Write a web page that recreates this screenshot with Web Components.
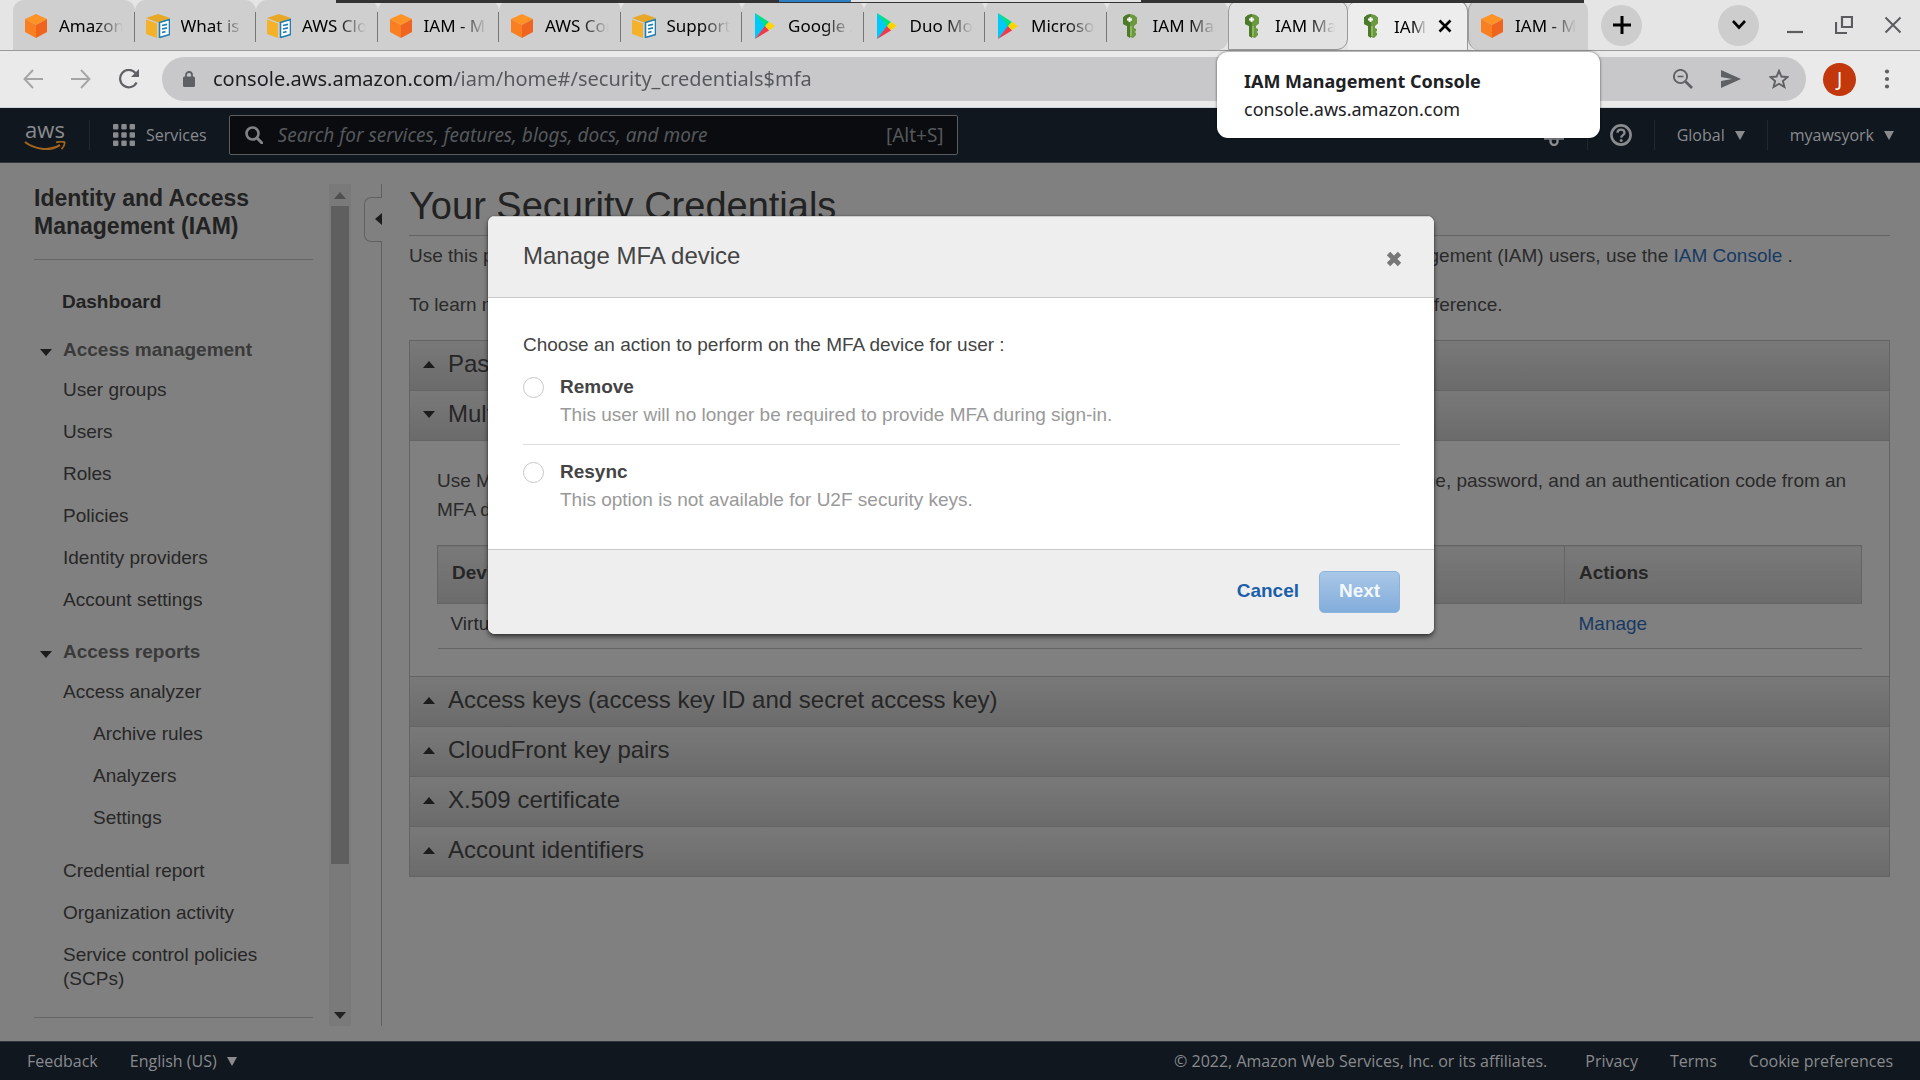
<!DOCTYPE html>
<html lang="en">
<head>
<meta charset="utf-8">
<title>IAM Management Console</title>
<style>
  html, body { height: 100%; margin: 0; }
  body { font-family: "Liberation Sans", Arial, sans-serif; background: #808080; overflow: hidden; }
</style>
</head>
<body>
<browser-window></browser-window>

<script>
const define = (name, css, html, setup) => customElements.define(name, class extends HTMLElement {
  constructor() {
    super();
    const t = document.createElement('template');
    t.innerHTML = `<style>*{box-sizing:border-box}${css}</style>${html}`;
    this.attachShadow({ mode: 'open' }).append(t.content.cloneNode(true));
  }
  connectedCallback() { if (setup) setup(this, this.shadowRoot); }
});

const ICONS = {
  cube: ['22 24', '<path d="M11 0 22 5 11 11 0 5z" fill="#ff9326"/><path d="M0 5 11 11V24L0 18z" fill="#f97f20"/><path d="M22 5 11 11V24l11-6z" fill="#ef6520"/>'],
  docs: ['24 24', '<path d="M12 0 24 4 13 9 0 4z" fill="#e8a827"/><path d="M0 5.500l11 4V24L0 20z" fill="#f3b229"/><path d="M13 9.500 24 5v14l-11 4z" fill="#e9a524"/><path d="M13.500 8.500 23.500 5.500v15l-10 3z" fill="#fff" stroke="#1f7fb5" stroke-width="1.600"/><path d="M16 11.500l5-1.200M16 15l5-1.200M16 18.500l3.500-.9" stroke="#1f7fb5" stroke-width="1.700"/>'],
  play: ['20 26', '<path d="M0 0v26l11-13z" fill="#00c8f8"/><path d="M0 0l14 9-4 4.500z" fill="#00e080"/><path d="M0 26l14-8.500-4-4.500z" fill="#f5374a"/><path d="M14 8.700 20 13l-6 4.300-4-4.300z" fill="#ffd400"/>'],
  key: ['14 24', '<path d="M0 3.500 3 1 7 0l4 1 3 2.500v6L11 12v2l2 1v2l-1.500 1 1.500 1v2l-3 3-6-2V12L0 10z" fill="#6a9940"/><path d="M0 3.500 3 1 7 0v24l-3-2V12L0 10z" fill="#4b7a2a"/><path d="M8 12v10" stroke="#8fb75f" stroke-width="2"/><path d="M6.500 3v5M4 5.500h5" stroke="#fff" stroke-width="1.800"/>'],
  close: ['14 14', '<path d="M1.500 1.500l11 11M12.500 1.500l-11 11" stroke="currentColor" stroke-width="2.600"/>'],
  plus: ['18 18', '<path d="M9 0v18M0 9h18" stroke="currentColor" stroke-width="3"/>'],
  chevron: ['14 10', '<path d="M1 1l6 6.500L13 1" fill="none" stroke="currentColor" stroke-width="2.600"/>'],
  minimize: ['18 18', '<path d="M1 16h16" stroke="currentColor" stroke-width="2.200"/>'],
  restore: ['18 18', '<path d="M7 1h10v10H7zM1 6v11h11" fill="none" stroke="currentColor" stroke-width="2.200"/>'],
  exit: ['18 18', '<path d="M1.500 1.500l15 15M16.500 1.500l-15 15" stroke="currentColor" stroke-width="2"/>'],
  back: ['20 20', '<path d="M20 10H2M10 1 1.500 10l8.500 9" fill="none" stroke="currentColor" stroke-width="1.900"/>'],
  forward: ['20 20', '<path d="M0 10h18M10 1l8.500 9L10 19" fill="none" stroke="currentColor" stroke-width="1.900"/>'],
  reload: ['20 20', '<path d="M17.600 13.500A8.700 8.700 0 1 1 16.500 4" fill="none" stroke="currentColor" stroke-width="2.200"/><path d="M20 0v8h-8z" fill="currentColor"/>'],
  lock: ['12 16', '<rect y="5.500" width="12" height="10.500" rx="1.500" fill="currentColor"/><path d="M3 6V4a3 3 0 0 1 6 0v2" fill="none" stroke="currentColor" stroke-width="1.800"/>'],
  zoomout: ['20 20', '<circle cx="7.500" cy="7.500" r="6.600" fill="none" stroke="currentColor" stroke-width="1.900"/><path d="M12.500 12.500l6.500 6.500" stroke="currentColor" stroke-width="2.600"/><path d="M4.500 7.500h6" stroke="currentColor" stroke-width="1.600"/>'],
  send: ['20 18', '<path d="M0 0l20 9-20 9v-7l11-2L0 7z" fill="currentColor"/>'],
  star: ['20 20', '<path d="M10 1.800l2.400 5.700 6.200.5-4.700 4 1.500 6L10 14.800 4.600 18l1.500-6-4.700-4 6.200-.5z" fill="none" stroke="currentColor" stroke-width="1.900"/>'],
  dots: ['6 20', '<g fill="currentColor"><circle cx="3" cy="2.500" r="2.100"/><circle cx="3" cy="10" r="2.100"/><circle cx="3" cy="17.500" r="2.100"/></g>'],
  smile: ['42 10', '<path d="M1 1c9 7 24 10 35 3" fill="none" stroke="currentColor" stroke-width="2.200"/><path d="M32 1.500c3-1 6-1.200 8.500-.4.600 2.400-1 5-3 7" fill="none" stroke="currentColor" stroke-width="1.800"/>'],
  grid: ['22 22', '<g fill="currentColor">' + [0, 8.300, 16.600].map(y => [0, 8.300, 16.600].map(x => `<rect x="${x}" y="${y}" width="5.400" height="5.400" rx="1"/>`).join('')).join('') + '</g>'],
  search: ['18 18', '<circle cx="7.500" cy="7.500" r="6" fill="none" stroke="currentColor" stroke-width="2.600"/><path d="M12 12l5 5" stroke="currentColor" stroke-width="3" stroke-linecap="round"/>'],
  bell: ['22 22', '<path d="M1 14.500h20M4 14V9a7 7 0 0 1 14 0v5" fill="none" stroke="currentColor" stroke-width="2.600"/><path d="M7.500 15v2.500a3.500 3.500 0 0 0 7 0V15" fill="none" stroke="currentColor" stroke-width="2.400"/>'],
  help: ['22 22', '<circle cx="11" cy="11" r="9.600" fill="none" stroke="currentColor" stroke-width="2.600"/><path d="M7.500 8.800c0-4.300 7-4.300 7 0 0 2.400-3.300 2.400-3.300 5" fill="none" stroke="currentColor" stroke-width="2.300"/><circle cx="11.200" cy="16.400" r="1.500" fill="currentColor"/>'],
  down: ['10 9', '<path d="M0 0h10L5 9z" fill="currentColor"/>'],
  caretdown: ['12 7', '<path d="M0 0h12L6 7z" fill="currentColor"/>'],
  caretup: ['12 7', '<path d="M0 7h12L6 0z" fill="currentColor"/>'],
  caretleft: ['7 12', '<path d="M7 0v12L0 6z" fill="currentColor"/>'],
  cross: ['16 16', '<path d="M2.500 2.500l11 11M13.500 2.500l-11 11" stroke="currentColor" stroke-width="4.800"/>'],
};

define('ui-icon', ':host{display:inline-flex;flex:none}svg{display:block}', '<span id="box"></span>', (el, root) => {
  const [size, body] = ICONS[el.getAttribute('name')];
  const [w, h] = size.split(' ');
  root.getElementById('box').innerHTML = `<svg width="${w}" height="${h}" viewBox="0 0 ${size}" aria-hidden="true">${body}</svg>`;
});

/* ---------- browser chrome ---------- */

define('browser-tab', `
  :host{display:flex;flex:1;min-width:0;height:50px}
  :host([state]),:host([edge=left]){flex:0 0 120px}
  button{flex:1;min-width:0;display:flex;align-items:center;gap:11px;height:50px;padding:1px 12px 0 11px;border:0;
    border-radius:11px 11px 0 0;background:#cfcfcf;color:#000;font:17px "Noto Sans","Open Sans",sans-serif;text-align:left;position:relative}
  .icon{width:24px;flex:none;display:flex;justify-content:center}
  .label{flex:1;min-width:0;overflow:hidden;white-space:nowrap;-webkit-mask-image:linear-gradient(90deg,#000 55%,transparent);mask-image:linear-gradient(90deg,#000 55%,transparent)}
  :host([divider]) button::after{content:"";position:absolute;right:0;top:12px;height:30px;border-right:1px solid #777}
  :host([state=selected]) button{background:#e2e2e2;border:1px solid #999;border-bottom-right-radius:11px}
  :host([state=active]) button{background:#ededed;border-top:1px solid #999;border-right:1px solid #999;gap:11px;padding-right:15px}
  :host([edge=right]) button{border-bottom-right-radius:11px}
  :host([edge=left]) button{border-bottom-left-radius:11px;border-left:1px solid #999}
  #close{display:none;color:#000}
  :host([state=active]) #close{display:flex}
`, `<button type="button"><span class="icon"></span><span class="label"><slot></slot></span><ui-icon id="close" name="close"></ui-icon></button>`,
(el, root) => { root.querySelector('.icon').innerHTML = `<ui-icon name="${el.getAttribute('icon')}"></ui-icon>`; });

define('tab-strip', `
  :host{display:flex;height:51px;padding-left:13px;background:#e5e5e5;border-bottom:1px solid #9a9a9a}
  .tabs{flex:1;display:flex;min-width:0}
  .controls{width:332px;display:flex;align-items:center;padding:0 18px 0 13px}
  button{border:0;padding:0;background:none;display:flex;align-items:center;justify-content:center;color:#5c5c60;width:18px;height:30px}
  .round{width:41px;height:41px;border-radius:50%;background:#cdcdcd;color:#000}
  .win{margin-left:auto;display:flex;align-items:center;gap:31px}
  .win .round{margin-right:-4px}
`, `
  <div class="tabs">
    <browser-tab icon="cube" divider>Amazon Web Services</browser-tab>
    <browser-tab icon="docs" divider>What is IAM?</browser-tab>
    <browser-tab icon="docs" divider>AWS Cloud</browser-tab>
    <browser-tab icon="cube" divider>IAM - MFA</browser-tab>
    <browser-tab icon="cube" divider>AWS Console</browser-tab>
    <browser-tab icon="docs" divider>Supported</browser-tab>
    <browser-tab icon="play" divider>Google&nbsp;Auth</browser-tab>
    <browser-tab icon="play" divider>Duo Mobile</browser-tab>
    <browser-tab icon="play" divider>Microsoft</browser-tab>
    <browser-tab icon="key" edge="right">IAM Management</browser-tab>
    <browser-tab icon="key" state="selected">IAM Management</browser-tab>
    <browser-tab icon="key" state="active">IAM Management</browser-tab>
    <browser-tab icon="cube" edge="left">IAM - MFA</browser-tab>
  </div>
  <div class="controls">
    <button class="round" type="button" aria-label="New tab"><ui-icon name="plus"></ui-icon></button>
    <div class="win">
      <button class="round" type="button" aria-label="Search tabs"><ui-icon name="chevron"></ui-icon></button>
      <button type="button" aria-label="Minimize"><ui-icon name="minimize"></ui-icon></button>
      <button type="button" aria-label="Restore"><ui-icon name="restore"></ui-icon></button>
      <button type="button" aria-label="Close"><ui-icon name="exit"></ui-icon></button>
    </div>
  </div>`);

define('address-bar', `
  :host{display:flex;align-items:center;height:57px;padding:0 30px 0 23px;background:#eaeaea;border-bottom:1px solid #d0d4d6;color:#5f6064}
  button{border:0;background:none;padding:0;display:flex;color:inherit}
  nav{display:flex;gap:28px;margin-right:23px;color:#a5a5a5}
  nav .on{color:#5f6064}
  .box{flex:1;display:flex;align-items:center;height:44px;border-radius:22px;background:#c8c8ca;padding:0 17px 0 21px;gap:28px}
  .box ui-icon[name=lock]{margin-right:-10px}
  input{flex:1;min-width:0;border:0;outline:0;padding:0 0 2px;height:44px;font:20px "Noto Sans","Open Sans",sans-serif;color:#55575b;
    background:linear-gradient(90deg,#1c1d20 239px,#55575b 239px);-webkit-background-clip:text;background-clip:text;-webkit-text-fill-color:transparent}
  .avatar{width:33px;height:33px;border-radius:50%;background:#c2370b;color:#fff;font:19px "Noto Sans",sans-serif;align-items:center;justify-content:center;margin:0 28px 0 17px}
`, `
  <nav>
    <button type="button" aria-label="Back"><ui-icon name="back"></ui-icon></button>
    <button type="button" aria-label="Forward"><ui-icon name="forward"></ui-icon></button>
    <button type="button" class="on" aria-label="Reload"><ui-icon name="reload"></ui-icon></button>
  </nav>
  <div class="box">
    <ui-icon name="lock"></ui-icon>
    <input type="text" aria-label="Address" value="console.aws.amazon.com/iam/home#/security_credentials$mfa">
    <button type="button" aria-label="Zoom"><ui-icon name="zoomout"></ui-icon></button>
    <button type="button" aria-label="Share"><ui-icon name="send"></ui-icon></button>
    <button type="button" aria-label="Bookmark"><ui-icon name="star"></ui-icon></button>
  </div>
  <button type="button" class="avatar">J</button>
  <button type="button" aria-label="Menu"><ui-icon name="dots"></ui-icon></button>`);

define('tab-tooltip', `
  :host{position:absolute;z-index:5;left:1217px;top:52px;width:383px;height:86px;padding:15px 27px;border-radius:11px;background:#fff;
    box-shadow:0 0 3px rgba(0,0,0,.6);color:#202124;font:18px/28px "Noto Sans","Open Sans",sans-serif;white-space:nowrap}
  b,span{display:block}
`, `<b>IAM Management Console</b><span>console.aws.amazon.com</span>`);

define('desktop-edge', `
  :host{position:absolute;z-index:4;left:336px;top:0;width:1248px;height:3px;background:#333;display:flex;padding-left:443px}
  i{height:2px}
  .b{width:72px;background:#2d7fc4}.w{width:290px;background:#e2e2e2}
`, `<i class="b"></i><i class="w"></i>`);

/* ---------- console frame ---------- */

define('console-header', `
  :host{display:flex;align-items:center;height:55px;padding:0 26px 0 24px;background:#10171f;border-bottom:1px solid #30353a;color:#898b8e;font:16px "Open Sans","Noto Sans",sans-serif}
  button,a{border:0;background:none;padding:0;color:inherit;font:inherit;display:flex;align-items:center;text-decoration:none}
  .logo{flex-direction:column;width:42px;font:22px/18px "Open Sans",sans-serif}
  .logo ui-icon{color:#a0651a;margin-top:3px}
  hr{width:1px;height:30px;border:0;margin:0;background:#22282f;flex:none}
  .services{gap:11px;margin:0 22px 0 23px}
  .search{width:729px;height:40px;display:flex;align-items:center;border:1px solid #5a5c5f;border-radius:2px;background:#0a0c10;padding:0 13px 0 15px;gap:15px;font:19px "Noto Sans","Open Sans",sans-serif;color:#55585b}
  .search ui-icon{color:#808285}
  input{flex:1;min-width:0;border:0;outline:0;background:none;padding:0;font:italic 19px "Noto Sans","Open Sans",sans-serif;color:#898b8e}
  input::placeholder{color:#55585b;opacity:1}
  .right{margin-left:auto;display:flex;align-items:center;gap:22px}
  .menu{gap:10px}
  .first{margin-left:23px}
`, `
  <a class="logo" href="#"><span>aws</span><ui-icon name="smile"></ui-icon></a>
  <hr class="first">
  <button class="services" type="button"><ui-icon name="grid"></ui-icon>Services</button>
  <label class="search"><ui-icon name="search"></ui-icon><input type="search" aria-label="Search" placeholder="Search for services, features, blogs, docs, and more"><span>[Alt+S]</span></label>
  <div class="right">
    <button type="button" aria-label="Notifications"><ui-icon name="bell"></ui-icon></button><hr>
    <button type="button" aria-label="Help"><ui-icon name="help"></ui-icon></button><hr>
    <button type="button" class="menu">Global <ui-icon name="down"></ui-icon></button><hr>
    <button type="button" class="menu">myawsyork <ui-icon name="down"></ui-icon></button>
  </div>`);

define('console-footer', `
  :host{display:flex;align-items:center;height:39px;padding:0 27px;background:#10171f;border-top:1px solid #30353a;color:#898b8e;font:16px "Open Sans","Noto Sans",sans-serif;gap:32px}
  a,button{color:inherit;text-decoration:none;font:inherit;border:0;padding:0;background:none;display:flex;align-items:center;gap:10px}
  .copy{margin-left:auto;margin-right:6px}
`, `
  <a href="#">Feedback</a>
  <button type="button">English (US) <ui-icon name="down"></ui-icon></button>
  <span class="copy">© 2022, Amazon Web Services, Inc. or its affiliates.</span>
  <a href="#">Privacy</a><a href="#">Terms</a><a href="#">Cookie preferences</a>`);

/* ---------- side navigation ---------- */

define('nav-group', `
  :host{display:block;margin-top:24px}
  button{display:flex;align-items:center;gap:11px;border:0;background:none;padding:0 0 0 6px;font:bold 19px/24px "Liberation Sans",Arial,sans-serif;color:#3a3a3a}
  ui-icon{color:#1c1c1c;margin-top:4px}
  ul{list-style:none;margin:16px 0 0 29px;padding:0;display:flex;flex-direction:column;gap:18px}
`, `<button type="button"><ui-icon name="caretdown"></ui-icon><span id="h"></span></button><ul><slot></slot></ul>`,
(el, root) => { root.getElementById('h').textContent = el.getAttribute('heading'); });

define('nav-item', `
  :host{display:list-item;list-style:none;font-size:19px;line-height:24px}
  :host([nested]){padding-left:30px}
  :host([spaced]){margin-top:11px}
  a{color:#272727;text-decoration:none}
`, `<a href="#"><slot></slot></a>`);

define('iam-nav', `
  :host{display:flex;width:382px;flex:none;padding:21px 0 15px}
  .list{width:279px;margin:0 16px 0 34px;flex:none;overflow:hidden}
  h2{font-size:23px;line-height:28px;margin:0;padding-bottom:19px;border-bottom:1px solid #666;color:#222}
  .home{display:block;margin:30px 0 0 28px;font:bold 19px/24px "Liberation Sans",Arial,sans-serif;color:#222;text-decoration:none}
  nav-group + nav-group{margin-top:28px}
  hr{border:0;border-top:1px solid #666;margin:26px 0 0}
  .bar{width:22px;flex:none;background:#7a7a7a;padding:0 2px;display:flex;flex-direction:column;align-items:center;color:#505050}
  .bar ui-icon{height:22px;align-items:center}
  .thumb{width:18px;flex:658;background:#5f5f5f}
  .rest{flex:140}
  .bar .end{color:#222}
  .edge{flex:1;display:flex;flex-direction:column;align-items:flex-end}
  .line{width:1px;background:#606060;flex:none;height:13px}
  .line.long{flex:1}
  .toggle{width:18px;height:45px;border:1px solid #606060;border-right:0;border-radius:7px 0 0 7px;background:none;padding:0 0 2px;display:flex;align-items:center;justify-content:flex-end;color:#1c1c1c}
`, `
  <div class="list">
    <h2>Identity and Access Management (IAM)</h2>
    <a class="home" href="#">Dashboard</a>
    <nav-group heading="Access management">
      <nav-item>User groups</nav-item><nav-item>Users</nav-item><nav-item>Roles</nav-item>
      <nav-item>Policies</nav-item><nav-item>Identity providers</nav-item><nav-item>Account settings</nav-item>
    </nav-group>
    <nav-group heading="Access reports">
      <nav-item>Access analyzer</nav-item><nav-item nested>Archive rules</nav-item><nav-item nested>Analyzers</nav-item>
      <nav-item nested>Settings</nav-item><nav-item spaced>Credential report</nav-item>
      <nav-item>Organization activity</nav-item><nav-item>Service control policies (SCPs)</nav-item>
    </nav-group>
    <hr>
  </div>
  <div class="bar"><ui-icon name="caretup"></ui-icon><div class="thumb"></div><div class="rest"></div><ui-icon class="end" name="caretdown"></ui-icon></div>
  <div class="edge"><div class="line"></div><button class="toggle" type="button" aria-label="Collapse navigation"><ui-icon name="caretleft"></ui-icon></button><div class="line long"></div></div>`);

/* ---------- credentials page ---------- */

define('accordion-section', `
  :host{display:block}
  button{width:100%;height:50px;display:flex;align-items:center;gap:13px;padding:0 13px 4px;border:0;border-top:1px solid #646464;
    background:linear-gradient(#797979,#6b6b6b);font:24px "Liberation Sans",Arial,sans-serif;color:#262626;text-align:left}
  ui-icon{margin-top:2px;color:#1c1c1c}
  .panel{display:none;border-top:1px solid #646464;padding:25px 27px 27px}
  :host([open]) .panel,:host([open]) .opened,:host(:not([open])) .closed{display:block}
  .opened,.closed{display:none}
`, `<button type="button"><ui-icon class="closed" name="caretup"></ui-icon><ui-icon class="opened" name="caretdown"></ui-icon><span id="t"></span></button><div class="panel"><slot></slot></div>`,
(el, root) => { root.getElementById('t').textContent = el.getAttribute('heading'); });

define('device-table', `
  :host{display:block}
  table{width:100%;border-collapse:collapse;table-layout:fixed;font-size:19px;color:#262626}
  th{height:58px;text-align:left;padding:0 14px 4px;background:linear-gradient(#797979,#6c6c6c);border:1px solid #646464}
  td{height:45px;padding:0 14px 5px 13px;border-bottom:1px solid #646464}
  th:last-child{width:297px}
  td:last-child{padding-left:14px}
  a{color:#173a63;text-decoration:none}
`, `<table><thead><tr><th>Device type</th><th>Actions</th></tr></thead><tbody><tr><td>Virtual</td><td><a href="#">Manage</a></td></tr></tbody></table>`);

define('credentials-page', `
  :host{display:block;flex:1;min-width:0;padding:22px 30px 0 27px;color:#2a2a2a;font-size:19px;line-height:29px}
  h1{font-size:38px;font-weight:400;line-height:42px;margin:0;padding-bottom:8px;border-bottom:1px solid #646464;color:#222}
  p{margin:0}
  .intro{margin-top:5px}
  .more{margin:20px 0 21px}
  .set{border:1px solid #646464;border-top:0}
  a{color:#173a63;text-decoration:none}
  device-table{margin-top:21px;line-height:24px}
`, `
  <h1>Your Security Credentials</h1>
  <p class="intro">Use this page to manage the credentials of your AWS account. To manage credentials for AWS Identity and Access Management (IAM) users, use the <a href="#">IAM Console</a> .</p>
  <p class="more">To learn more about the type of AWS credentials and how they're used, see <a href="#">AWS Security Credentials</a> in AWS General Reference.</p>
  <div class="set">
    <accordion-section heading="Password"></accordion-section>
    <accordion-section heading="Multi-factor authentication (MFA)" open>
      <p>Use MFA to increase the security of your AWS environment. Signing in to MFA-protected accounts requires a user name, password, and an authentication code from an MFA device.</p>
      <device-table></device-table>
    </accordion-section>
    <accordion-section heading="Access keys (access key ID and secret access key)"></accordion-section>
    <accordion-section heading="CloudFront key pairs"></accordion-section>
    <accordion-section heading="X.509 certificate"></accordion-section>
    <accordion-section heading="Account identifiers"></accordion-section>
  </div>`);

/* ---------- modal ---------- */

define('action-option', `
  :host{display:block}
  label{display:grid;grid-template-columns:21px 1fr;column-gap:16px;align-items:center;line-height:28px;font-size:19px;color:#999}
  input{appearance:none;width:21px;height:21px;margin:0;border:1px solid #c8c8c8;border-radius:50%;background:#fff}
  b{color:#444}
  .hint{grid-column:2}
`, `<label><input type="radio" name="action"><b><slot name="title"></slot></b><span class="hint"><slot></slot></span></label>`);

define('mfa-dialog', `
  :host{position:absolute;z-index:3;left:0;right:0;top:216px;display:flex;justify-content:center;padding-left:2px}
  dialog{position:static;display:block;width:946px;margin:0;padding:0;border:0;border-radius:7px;background:#fff;overflow:hidden;color:#444;font-size:19px;line-height:28px;box-shadow:0 3px 5px rgba(0,0,0,.55),0 0 2px rgba(0,0,0,.4)}
  header{display:flex;align-items:center;justify-content:space-between;height:82px;padding:0 32px 2px 35px;background:#eee;border-bottom:1px solid #c8c8c8;border-top:1px solid #ccc}
  h2{font-size:24px;font-weight:400;margin:0}
  button{border:0;background:none;padding:0;font:bold 19px "Liberation Sans",Arial,sans-serif}
  .x{display:flex;color:#777;margin-top:5px}
  .body{padding:33px 34px 35px 35px}
  p{margin:0 0 14px}
  hr{border:0;border-top:1px solid #ddd;margin:15px 0 13px}
  footer{display:flex;align-items:center;justify-content:flex-end;gap:20px;height:85px;padding:0 34px 0 0;background:#eee;border-top:1px solid #c8c8c8}
  .cancel{color:#1b5fab;padding-bottom:2px}
  .next{width:81px;height:42px;border:1px solid #8db3dd;border-radius:5px;background:linear-gradient(#a9c7e7,#82addb);color:#f3f8fd;padding-bottom:2px}
`, `
  <dialog open aria-labelledby="t">
    <header><h2 id="t">Manage MFA device</h2><button class="x" type="button" aria-label="Close"><ui-icon name="cross"></ui-icon></button></header>
    <div class="body">
      <p>Choose an action to perform on the MFA device for user :</p>
      <action-option><span slot="title">Remove</span>This user will no longer be required to provide MFA during sign-in.</action-option>
      <hr>
      <action-option><span slot="title">Resync</span>This option is not available for U2F security keys.</action-option>
    </div>
    <footer><button class="cancel" type="button">Cancel</button><button class="next" type="button">Next</button></footer>
  </dialog>`);

define('browser-window', `
  :host{display:flex;flex-direction:column;height:100vh;position:relative}
  main{flex:1;min-height:0;display:flex;background:#808080}
`, `
  <tab-strip></tab-strip>
  <address-bar></address-bar>
  <console-header></console-header>
  <main><iam-nav></iam-nav><credentials-page></credentials-page></main>
  <console-footer></console-footer>
  <desktop-edge></desktop-edge>
  <tab-tooltip></tab-tooltip>
  <mfa-dialog></mfa-dialog>`);
</script>
</body>
</html>
